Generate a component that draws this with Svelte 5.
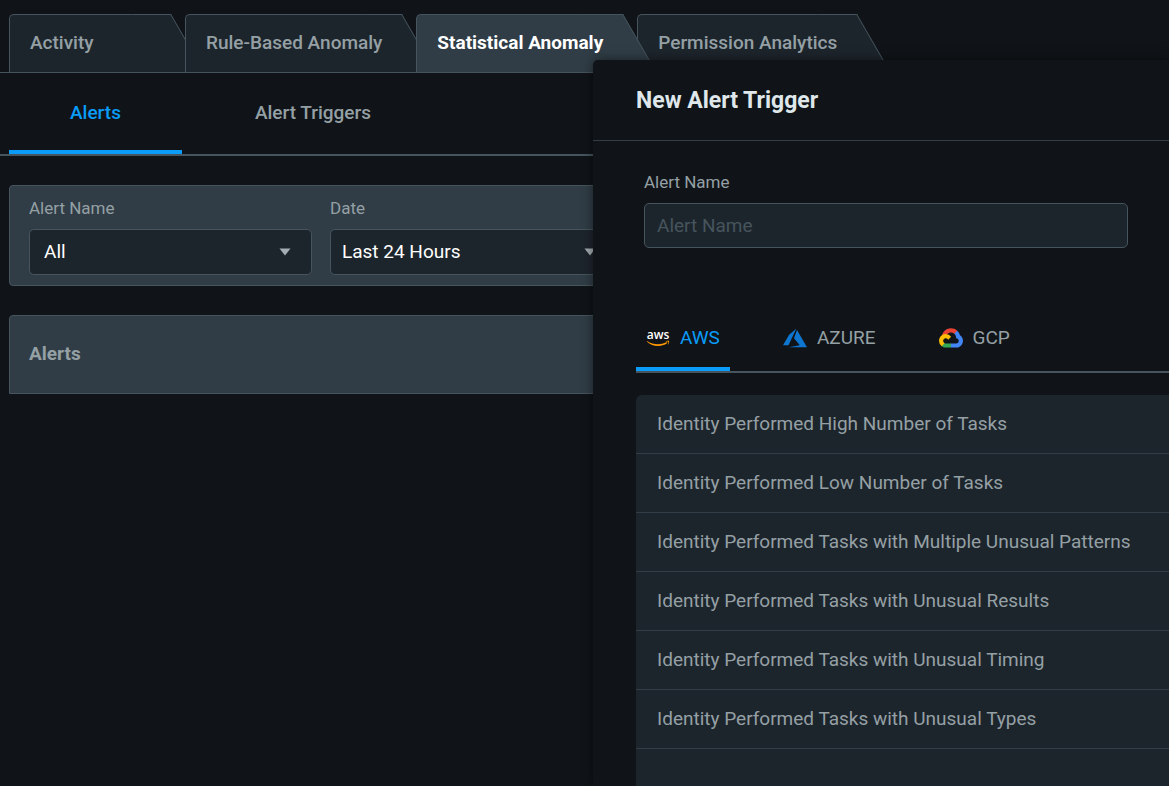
<script>
  const sections = ['Activity', 'Rule-Based Anomaly', 'Statistical Anomaly', 'Permission Analytics'];
  let section = $state('Statistical Anomaly');

  const views = ['Alerts', 'Alert Triggers'];
  let view = $state('Alerts');

  const providers = ['AWS', 'AZURE', 'GCP'];
  let provider = $state('AWS');

  let alertName = $state('');

  const triggers = [
    'Identity Performed High Number of Tasks',
    'Identity Performed Low Number of Tasks',
    'Identity Performed Tasks with Multiple Unusual Patterns',
    'Identity Performed Tasks with Unusual Results',
    'Identity Performed Tasks with Unusual Timing',
    'Identity Performed Tasks with Unusual Types'
  ];
</script>

{#snippet caret()}
  <svg class="caret" viewBox="0 0 12 8" aria-hidden="true"><path d="M0.5 0.5h11L6 7.5z" /></svg>
{/snippet}

<div class="page">
  <nav class="sections">
    {#each sections as name}
      <button class="section" class:active={section === name} onclick={() => (section = name)}>
        <span>{name}</span>
      </button>
    {/each}
  </nav>

  <nav class="views">
    {#each views as name}
      <button class="view" class:active={view === name} onclick={() => (view = name)}>{name}</button>
    {/each}
  </nav>

  <main>
    <form class="filters">
      <div class="field">
        <label for="filter-name">Alert Name</label>
        <div class="select">
          <select id="filter-name"><option>All</option></select>
          {@render caret()}
        </div>
      </div>
      <div class="field date">
        <label for="filter-date">Date</label>
        <div class="select">
          <select id="filter-date"><option>Last 24 Hours</option></select>
          {@render caret()}
        </div>
      </div>
    </form>

    <section class="results">
      <h2>Alerts</h2>
    </section>
  </main>

  <aside class="drawer">
    <header><h1>New Alert Trigger</h1></header>

    <div class="drawer-body">
      <div class="name-field">
        <label for="trigger-name">Alert Name</label>
        <input id="trigger-name" type="text" placeholder="Alert Name" bind:value={alertName} />
      </div>

      <nav class="providers">
        {#each providers as name}
          <button class="provider" class:active={provider === name} onclick={() => (provider = name)}>
            {#if name === 'AWS'}
              <svg viewBox="0 0 24 20" aria-hidden="true">
                <text x="12" y="11" text-anchor="middle" class="aws-word">aws</text>
                <g fill="#f90" transform="translate(0 .8)">
                  <path d="M1.3 12.4C6.4 15.8 14.6 16.6 20.2 13.5c.9-.4 1.5.4.8 1C15.6 18.4 6 18 1 12.9c-.4-.4-.1-.8.3-.5z" />
                  <path d="M22.1 15.6c-.2.2-.5.1-.3-.3.4-.9.8-1.9.5-2.2-.3-.4-1.5-.3-2.2-.2-.3 0-.4-.2-.1-.4 1.1-.7 2.8-.6 3.1-.3.3.3-.1 2.4-1 3.4z" />
                </g>
              </svg>
            {:else if name === 'AZURE'}
              <svg viewBox="0 2 24 20" aria-hidden="true">
                <path fill="#0f76cf" d="M5.483 21.3H24L14.025 4.013l-3.038 8.347 5.836 6.938L5.483 21.3zM13.23 2.7L6.105 8.677 0 19.253h5.505v.014L13.23 2.7z" />
              </svg>
            {:else}
              <svg viewBox="0 -4 256 214" aria-hidden="true">
                <path fill="#ea4335" d="M170.252 56.819l22.253-22.253 1.483-9.37C153.437-11.677 88.976-7.496 52.42 33.92 42.267 45.423 34.734 59.764 30.717 74.573l7.97-1.123 44.505-7.34 3.436-3.513c19.797-21.742 53.27-24.667 76.128-6.168l7.496.39z" />
                <path fill="#4285f4" d="M224.205 73.918a100.249 100.249 0 0 0-30.217-48.722l-31.232 31.232a55.515 55.515 0 0 1 20.379 44.037v5.544c15.35 0 27.797 12.45 27.797 27.796 0 15.352-12.446 27.485-27.797 27.485h-55.671l-5.466 5.934v33.34l5.466 5.231h55.67c39.93.311 72.553-31.494 72.864-71.424a72.303 72.303 0 0 0-31.793-60.453" />
                <path fill="#34a853" d="M71.87 205.796h55.593V161.29H71.87a27.275 27.275 0 0 1-11.467-2.498l-7.887 2.42-22.409 22.253-1.952 7.574c12.567 9.489 27.9 14.825 43.715 14.757" />
                <path fill="#fbbc05" d="M71.87 61.425C31.94 61.664-.237 94.228.001 134.158a72.301 72.301 0 0 0 28.222 56.88l32.248-32.246c-13.99-6.322-20.208-22.786-13.887-36.776 6.32-13.99 22.786-20.208 36.775-13.888a27.796 27.796 0 0 1 13.887 13.888l32.248-32.248A72.224 72.224 0 0 0 71.87 61.425" />
              </svg>
            {/if}
            {name}
          </button>
        {/each}
      </nav>

      <ul class="triggers">
        {#each triggers as trigger}
          <li><button>{trigger}</button></li>
        {/each}
      </ul>
    </div>
  </aside>
</div>

<style>
  :global(body) {
    background: #101418;
  }

  .page {
    --bg: #101418;
    --surface: #1d252c;
    --raised: #303d46;
    --line: #46545d;
    --muted: #95a0a5;
    --accent: #0a9cf8;
    position: relative;
    min-height: 100vh;
    overflow: hidden;
    background: var(--bg);
    color: var(--muted);
    font: 400 19px/24px Roboto, sans-serif;
  }

  *,
  *::before,
  *::after {
    box-sizing: border-box;
  }

  button,
  input,
  select {
    margin: 0;
    font: inherit;
    color: inherit;
  }

  button {
    border: 0;
    padding: 0;
    background: none;
    cursor: pointer;
  }

  h1,
  h2 {
    margin: 0;
  }

  .sections {
    display: flex;
    gap: 14px;
    padding: 14px 9px 0;
    border-bottom: 1px solid var(--line);
  }

  .section {
    --fill: var(--surface);
    position: relative;
    min-width: 162px;
    height: 58px;
    padding: 0 20px 2px;
    border: solid var(--line);
    border-width: 1px 0 0 1px;
    border-radius: 5px 0 0 0;
    background: var(--fill);
    font-weight: 500;
    text-align: left;
    white-space: nowrap;
  }

  /* slanted right edge of the folder tab */
  .section::after {
    content: '';
    position: absolute;
    top: -1px;
    right: 0;
    bottom: 0;
    width: 40px;
    border: solid var(--line);
    border-width: 1px 1px 0 0;
    background: var(--fill);
    transform: skewX(30deg);
    transform-origin: top right;
  }

  .section span {
    position: relative;
    z-index: 1;
  }

  .section.active {
    --fill: var(--raised);
    z-index: 1;
    color: #fff;
    font-weight: 700;
  }

  .views {
    display: flex;
    gap: 12px;
    padding: 0 9px;
    border-bottom: 2px solid var(--line);
  }

  .view {
    height: 81px;
    padding: 3px 61px 0;
    border-bottom: 4px solid transparent;
    font-weight: 500;
  }

  .view.active {
    border-bottom-color: var(--accent);
    color: var(--accent);
  }

  main {
    display: grid;
    gap: 29px;
    padding: 29px 9px;
  }

  .filters {
    display: flex;
    gap: 18px;
    padding: 10px 19px;
    border: 1px solid var(--line);
    border-radius: 4px;
    background: var(--raised);
  }

  .field {
    display: grid;
    gap: 9px;
    width: 283px;
  }

  .field.date {
    width: 287px;
  }

  label {
    font-size: 17px;
  }

  .select {
    display: grid;
    align-items: center;
  }

  .select > :global(*) {
    grid-area: 1 / 1;
  }

  select {
    appearance: none;
    width: 100%;
    height: 46px;
    padding: 0 40px 0 14px;
    border: 1px solid var(--line);
    border-radius: 5px;
    background: var(--surface);
    color: #fff;
  }

  .date select {
    padding-left: 11px;
  }

  .caret {
    justify-self: end;
    width: 12px;
    height: 8px;
    margin-right: 21px;
    fill: #a3adb2;
    pointer-events: none;
  }

  .results {
    padding: 26px 19px 27px;
    border: 1px solid var(--line);
    border-radius: 4px 4px 0 0;
    background: var(--raised);
  }

  h2 {
    font-size: 19px;
    font-weight: 700;
  }

  .drawer {
    position: absolute;
    z-index: 2;
    top: 60px;
    right: 0;
    bottom: 0;
    display: flex;
    flex-direction: column;
    width: 576px;
    max-width: 100%;
    overflow: hidden;
    border-radius: 5px 0 0 0;
    background: var(--bg);
    box-shadow: 0 0 12px rgb(0 0 0 / 50%);
  }

  .drawer header {
    padding: 27px 43px 25px;
    border-bottom: 1px solid var(--raised);
  }

  h1 {
    color: #dfe7eb;
    font-size: 23px;
    font-weight: 700;
    line-height: 28px;
  }

  .drawer-body {
    flex: 1;
    display: flex;
    flex-direction: column;
    min-height: 0;
    padding: 29px 0 0 43px;
  }

  .name-field {
    display: grid;
    gap: 9px;
    padding: 0 41px 0 8px;
  }

  input {
    width: 100%;
    height: 45px;
    padding: 0 12px;
    border: 1px solid var(--line);
    border-radius: 5px;
    background: var(--surface);
    color: #fff;
  }

  input::placeholder {
    color: #46545d;
    opacity: 1;
  }

  .providers {
    display: flex;
    gap: 43px;
    margin-top: 57px;
    border-bottom: 2px solid var(--line);
  }

  .provider {
    display: flex;
    align-items: center;
    gap: 10px;
    height: 66px;
    padding: 4px 10px 0;
    border-bottom: 4px solid transparent;
  }

  .provider.active {
    border-bottom-color: var(--accent);
    color: var(--accent);
  }

  .provider svg {
    width: 24px;
    height: 20px;
    overflow: visible;
  }

  .aws-word {
    fill: #fff;
    font: 600 12px 'Open Sans', sans-serif;
  }

  .triggers {
    flex: 1;
    min-height: 0;
    margin: 22px 0 0;
    padding: 0;
    border-radius: 6px 0 0 0;
    background: var(--surface);
    list-style: none;
  }

  .triggers li {
    border-bottom: 1px solid var(--raised);
  }

  .triggers button {
    width: 100%;
    height: 58px;
    padding: 0 21px;
    text-align: left;
    white-space: nowrap;
  }
</style>
